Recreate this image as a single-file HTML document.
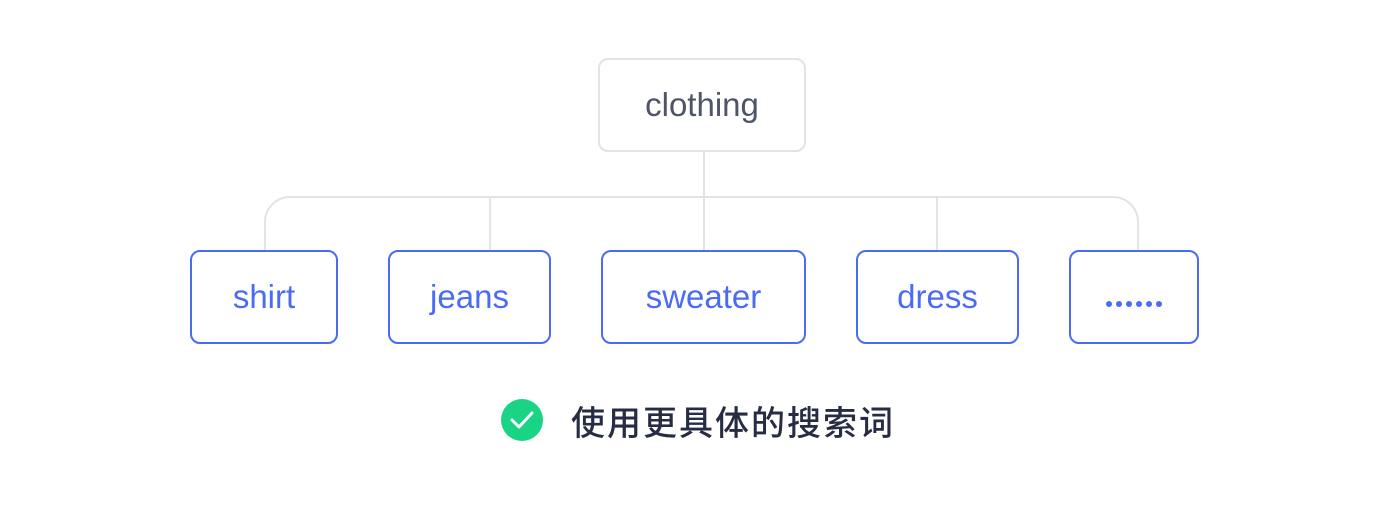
<!DOCTYPE html>
<html><head><meta charset="utf-8"><style>
body{margin:0;width:1392px;height:510px;background:#fff;position:relative;overflow:hidden;font-family:"Liberation Sans","Noto Sans CJK SC",sans-serif}
.b{position:absolute;box-sizing:border-box;border:2px solid #4b6bf5;border-radius:10px;display:flex;align-items:center;justify-content:center;color:#4b6bf5;font-size:33px;background:#fff}
.top{border-color:#e2e3e8;color:#4e5568}
.t{position:absolute;left:571px;top:396px;font-size:34px;color:#262c44;font-weight:500;letter-spacing:2px;font-family:"Liberation Sans","Noto Sans CJK SC",sans-serif}
.d{display:inline-block;width:6px;height:6px;border-radius:50%;background:#4b6bf5;margin:0 2px}
</style></head><body>
<svg width="1392" height="510" style="position:absolute;left:0;top:0">
<g fill="none" stroke="#e2e3e8" stroke-width="2">
<path d="M265 250 V222 A25 25 0 0 1 290 197 H1113 A25 25 0 0 1 1138 222 V250"/>
<path d="M704 150 V250 M490 197 V250 M937 197 V250"/>
</g>
<circle cx="522" cy="420" r="21" fill="#19d484"/>
<path d="M512 420 L519 427 L532 413" fill="none" stroke="#fff" stroke-width="3" stroke-linecap="round" stroke-linejoin="round"/>
</svg>
<div class="b top" style="left:598px;top:58px;width:208px;height:94px">clothing</div>
<div class="b" style="left:190px;top:250px;width:148px;height:94px">shirt</div>
<div class="b" style="left:388px;top:250px;width:163px;height:94px">jeans</div>
<div class="b" style="left:601px;top:250px;width:205px;height:94px">sweater</div>
<div class="b" style="left:856px;top:250px;width:163px;height:94px">dress</div>
<div class="b" style="left:1069px;top:250px;width:130px;height:94px;padding-top:14px"><span class="d"></span><span class="d"></span><span class="d"></span><span class="d"></span><span class="d"></span><span class="d"></span></div>
<div class="t">使用更具体的搜索词</div>
</body></html>
